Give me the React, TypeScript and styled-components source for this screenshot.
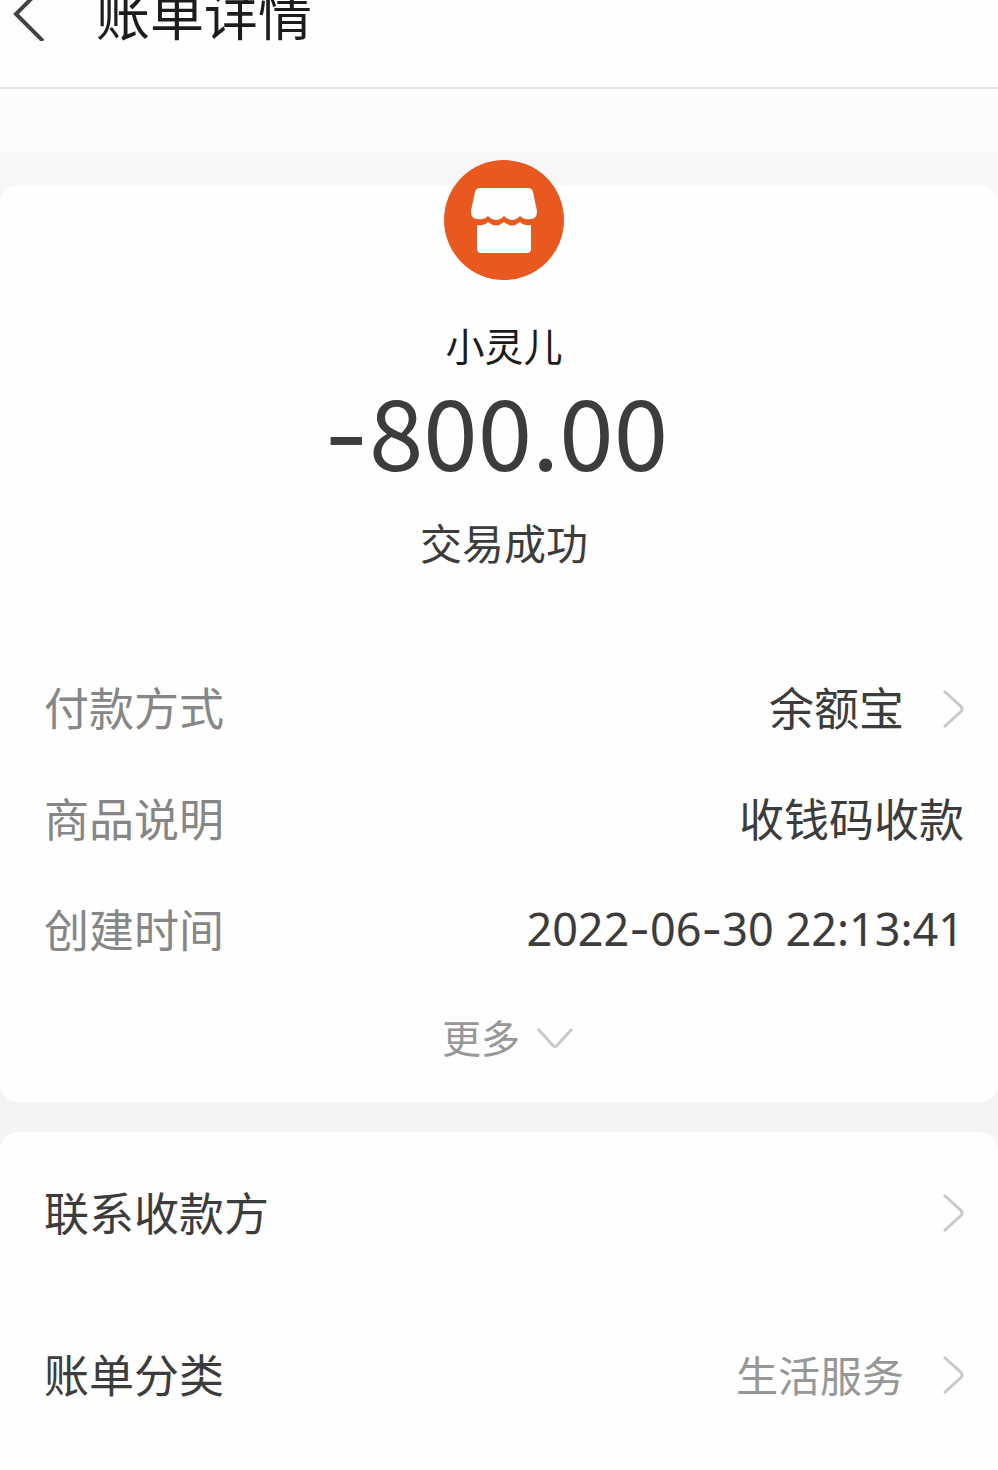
import React from "react";
import styled, { createGlobalStyle } from "styled-components";

const GlobalStyle = createGlobalStyle`
  *, *::before, *::after { box-sizing: border-box; }
  body {
    margin: 0;
    background: #fefefe;
    color: #3c3c3c;
    font-family: "Noto Sans CJK SC", "Noto Sans", sans-serif;
  }
  button {
    margin: 0;
    padding: 0;
    border: 0;
    background: none;
    color: inherit;
    font: inherit;
    text-align: left;
    cursor: pointer;
  }
`;

const Page = styled.div`
  display: flex;
  flex-direction: column;
  min-height: 100vh;
`;

const Header = styled.header`
  display: flex;
  align-items: flex-start;
  gap: 52px;
  height: 89px;
  padding-left: 10px;
  border-bottom: 2px solid #e4e4e4;
  background: #fefefe;
`;

const BackButton = styled.button`
  display: flex;
  height: 30px;
  align-items: center;
`;

const Title = styled.h1`
  margin: 0;
  color: #1c1c1c;
  font-size: 54px;
  font-weight: 400;
  line-height: 26px;
`;

const Strip = styled.div`
  height: 63px;
  background: #fcfcfc;
`;

const Main = styled.main`
  display: flex;
  flex: 1;
  flex-direction: column;
  gap: 30px;
  padding-top: 33px;
  background: linear-gradient(#f7f7f7 200px, #f4f4f4 200px);
`;

const Card = styled.section`
  padding: 0 34px 0 44px;
  border-radius: 18px;
  background: #fefefe;
`;

const BillCard = styled(Card)`
  padding-bottom: 14px;
`;

const ActionsCard = styled(Card)`
  display: flex;
  flex: 1;
  flex-direction: column;
  gap: 4px;
  border-radius: 18px 18px 0 0;
`;

const Summary = styled.div`
  display: flex;
  flex-direction: column;
  align-items: center;
  margin-top: -25px;
`;

const Merchant = styled.h2`
  margin: 38px 0 8px;
  color: #1c1c1c;
  font-size: 39px;
  font-weight: 400;
  line-height: 52px;
`;

const Amount = styled.p`
  margin: 0 16px 0 0;
  font-size: 98px;
  line-height: 100px;
`;

const Dash = styled.span`
  font-family: Inter, sans-serif;
  line-height: 0;
`;

const Status = styled.p`
  margin: 36px 0 0;
  font-size: 42px;
  line-height: 56px;
`;

const Details = styled.dl`
  margin: 81px 0 0;
`;

const DetailRow = styled.div`
  display: flex;
  align-items: center;
  justify-content: space-between;
  height: 111px;
  font-size: 45px;
`;

const Label = styled.dt`
  color: #868686;
`;

const Value = styled.dd<{ $latin?: boolean }>`
  margin: 0;
  font-family: ${(p) => (p.$latin ? '"Noto Sans", sans-serif' : "inherit")};
`;

const ValueButton = styled.button`
  display: flex;
  align-items: center;
  gap: 39px;
`;

const MoreButton = styled.button`
  display: flex;
  align-items: center;
  justify-content: center;
  gap: 16px;
  width: 100%;
  height: 104px;
  padding-left: 8px;
  color: #979797;
  font-size: 39px;
`;

const ActionRow = styled.button`
  display: flex;
  align-items: center;
  width: 100%;
  height: 158px;
  gap: 39px;
  font-size: 45px;
`;

const ActionName = styled.span`
  flex: 1;
`;

const Hint = styled.span`
  color: #979797;
  font-size: 42px;
`;

const Icon = styled.svg`
  flex: none;
  margin-top: 4px;
  fill: none;
  stroke: #c9c9c9;
  stroke-width: 3px;
`;

const ChevronRight = () => (
  <Icon width="21" height="40" viewBox="0 0 21 40" aria-hidden="true">
    <path d="M1 2 L18 17.5 Q20 20 18 22.5 L1 38" />
  </Icon>
);

const ChevronDown = () => (
  <Icon width="38" height="22" viewBox="0 0 38 22" aria-hidden="true">
    <path d="M2 2 L17 18.5 Q19 20.5 21 18.5 L36 2" />
  </Icon>
);

const BackIcon = () => (
  <svg width="34" height="52" viewBox="0 0 34 52" fill="none" stroke="#424242" strokeWidth="4" aria-hidden="true">
    <path d="M32 -1 L6 25 L33 52" />
  </svg>
);

const ShopLogo = () => (
  <svg width="120" height="120" viewBox="0 0 120 120" aria-hidden="true">
    <circle cx="60" cy="60" r="60" fill="#e9581f" />
    <path
      fill="#fefefe"
      d="M36 28 H84 Q88 28 89 32 L93 51 Q93 59 87 59 Q80 60 76 56 Q68 64 60 56 Q52 64 44 56 Q40 60 33 59 Q27 59 27 51 L31 32 Q32 28 36 28 Z"
    />
    <path
      fill="#fefefe"
      d="M33 65 Q40 66 44 62 Q52 69 60 62 Q68 69 76 62 Q80 66 87 65 V89 Q87 93 83 93 H37 Q33 93 33 89 Z"
    />
  </svg>
);

const withDashes = (text: string) =>
  text.split(/(-)/).map((part, i) => (part === "-" ? <Dash key={i}>-</Dash> : part));

export default function App() {
  return (
    <Page>
      <GlobalStyle />
      <Header>
        <BackButton type="button" aria-label="返回">
          <BackIcon />
        </BackButton>
        <Title>账单详情</Title>
      </Header>
      <Strip />
      <Main>
        <BillCard>
          <Summary>
            <ShopLogo />
            <Merchant>小灵儿</Merchant>
            <Amount>{withDashes("-800.00")}</Amount>
            <Status>交易成功</Status>
          </Summary>
          <Details>
            <DetailRow>
              <Label>付款方式</Label>
              <Value>
                <ValueButton type="button">
                  余额宝
                  <ChevronRight />
                </ValueButton>
              </Value>
            </DetailRow>
            <DetailRow>
              <Label>商品说明</Label>
              <Value>收钱码收款</Value>
            </DetailRow>
            <DetailRow>
              <Label>创建时间</Label>
              <Value $latin>{withDashes("2022-06-30 22:13:41")}</Value>
            </DetailRow>
          </Details>
          <MoreButton type="button">
            更多
            <ChevronDown />
          </MoreButton>
        </BillCard>
        <ActionsCard>
          <ActionRow type="button">
            <ActionName>联系收款方</ActionName>
            <ChevronRight />
          </ActionRow>
          <ActionRow type="button">
            <ActionName>账单分类</ActionName>
            <Hint>生活服务</Hint>
            <ChevronRight />
          </ActionRow>
        </ActionsCard>
      </Main>
    </Page>
  );
}
